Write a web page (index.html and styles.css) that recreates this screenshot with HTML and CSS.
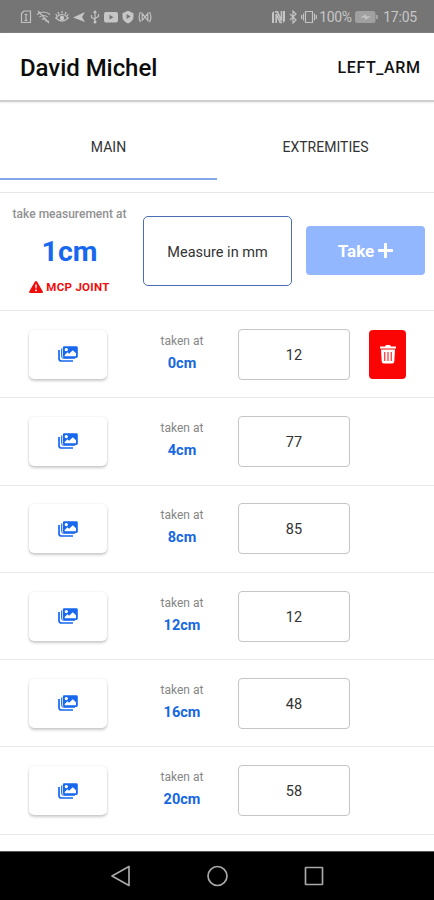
FILE: index.html
```html
<!DOCTYPE html>
<html lang="en">
<head>
<meta charset="utf-8">
<title>Measurements</title>
<link rel="stylesheet" href="styles.css">
</head>
<body>
<svg class="defs" width="0" height="0">
  <symbol id="images" viewBox="0 0 20 16">
    <path d="M1 4v8.500Q1 15 3.500 15H15" fill="none" stroke="currentColor" stroke-width="1.700"/>
    <path d="M3.600 2.500v7.800q0 2 2 2H17" fill="none" stroke="currentColor" stroke-width="1"/>
    <path fill="currentColor" fill-rule="evenodd" d="M6.200.3h12.200q1.400 0 1.400 1.400v8.800q0 1.400-1.400 1.400H6.200q-1.400 0-1.400-1.400V1.700Q4.800.3 6.200.3zM6.700 10.200h11.300V7.300l-3.200-3.100-3.700 3.600-1.600-1.500-2.800 2.600zM8.300 2a1.600 1.600 0 1 0 .01 0z"/>
  </symbol>
</svg>
<header class="status">
  <div class="status-left">
    <svg width="12" height="14" viewBox="0 0 12 14"><path d="M1.500 3.500L4 1h6.500v11.500h-9zM4.500 4.500h3M4.500 10.500h3M6 4.500v6"/></svg>
    <svg width="15" height="14" viewBox="0 0 15 14"><path d="M1 4.500q6.500-5 13 0M3.500 7q4-3 8 0M6 9.500q1.500-1.200 3 0M2 1l11 12M9 11h4"/></svg>
    <svg width="14" height="14" viewBox="0 0 14 14"><path d="M.8 8q6.200-7 12.400 0-6.200 6-12.400 0zM7 1v2.500M3 2l1 2.500M11 2l-1 2.500M.7 4l1.500 2M13.300 4l-1.500 2"/><circle class="solid" cx="7" cy="8" r="2.300"/></svg>
    <svg width="13" height="14" viewBox="0 0 13 14"><path class="solid" d="M0 7.500L12 2 9 7l3 5z"/></svg>
    <svg width="10" height="14" viewBox="0 0 10 14"><path d="M5 2v10M1.500 5v2.500L5 9.500M8.500 4v2.500L5 8.500"/><path class="solid" d="M5 0l2 3H3z"/><circle class="solid" cx="5" cy="12" r="1.500"/></svg>
    <svg width="14" height="14" viewBox="0 0 14 14"><path class="solid" fill-rule="evenodd" d="M2 2h10q2 0 2 2v6.500q0 2-2 2H2q-2 0-2-2V4q0-2 2-2zM5.500 4.800v4.800l4-2.400z"/></svg>
    <svg width="12" height="14" viewBox="0 0 12 14"><path class="solid" fill-rule="evenodd" d="M6 .8l5.500 2.400v3.500q0 4.300-5.500 6.800Q.5 11 .5 6.700V3.200zM4.600 4v5l4-2.500z"/></svg>
    <svg width="14" height="14" viewBox="0 0 14 14"><path d="M2.500 2Q-.3 7 2.500 12M11.500 2q2.800 5 0 10M4.200 11V3.500l5.600 7V3.500l-5.600 7"/></svg>
  </div>
  <div class="status-right">
    <svg width="13" height="14" viewBox="0 0 13 14"><path class="solid" d="M0 3l2-2v12H0zM11 1h2v10l-2 2z"/><path class="heavy" d="M3 1.800h2.500L9.500 11V1M4.200 13V4l4 8.500H10"/></svg>
    <svg width="8" height="14" viewBox="0 0 8 14"><path d="M1 4l6 6-3 3V1l3 3-6 6"/></svg>
    <svg width="16" height="14" viewBox="0 0 16 14"><path d="M4.500 1.500h7v11h-7zM2.500 3.500v7M13.500 3.500v7M.6 5v4M15.400 5v4"/></svg>
    <span class="pct">100%</span>
    <svg class="battery" width="23" height="12" viewBox="0 0 23 12"><rect class="charge" x="0" y="0" width="20.500" height="12" rx="2.500"/><path class="solid" d="M5 6.500l6-3V5.500h5l-6 3.200V6.500z"/><path d="M22 4v4"/></svg>
    <span class="time">17:05</span>
  </div>
</header>
<div class="titlebar">
  <h1>David Michel</h1>
  <span class="limb">LEFT_ARM</span>
</div>
<nav class="tabs">
  <div class="tab active">MAIN</div>
  <div class="tab">EXTREMITIES</div>
</nav>
<main>
  <section class="take-row">
    <div class="target">
      <span class="hint">take measurement at</span>
      <strong>1cm</strong>
      <span class="joint"><svg width="14" height="12" viewBox="0 0 14 12"><path fill="currentColor" fill-rule="evenodd" d="M7 0q.6 0 1 .6l5.800 10q.5 1.400-.9 1.400H1.100q-1.400 0-.9-1.400l5.800-10Q6.400 0 7 0zM6.200 3.500l.3 4h1l.3-4zM7 8.500a.9.900 0 1 0 .01 0z"/></svg>MCP JOINT</span>
    </div>
    <div class="measure">Measure in mm</div>
    <div class="take">Take<svg width="15" height="15" viewBox="0 0 15 15"><path d="M7.500 1v13M1 7.500h13" stroke="currentColor" stroke-width="3" stroke-linecap="round"/></svg></div>
  </section>
  <section class="row">
    <div class="photo"><svg width="20" height="16"><use href="#images"/></svg></div>
    <div class="at"><span>taken at</span><b>0cm</b></div>
    <div class="value">12</div>
    <div class="delete"><svg width="16" height="19" viewBox="0 0 16 19"><path fill="currentColor" d="M0 1.500h5L6 0h4l1 1.500h5v2H0z"/><path fill="currentColor" fill-rule="evenodd" d="M1 4.500h14l-.7 12q-.1 2-2 2H3.700q-1.900 0-2-2zM4.300 7v9h1V7zM7.500 7v9h1V7zM10.700 7v9h1V7z"/></svg></div>
  </section>
  <section class="row">
    <div class="photo"><svg width="20" height="16"><use href="#images"/></svg></div>
    <div class="at"><span>taken at</span><b>4cm</b></div>
    <div class="value">77</div>
  </section>
  <section class="row">
    <div class="photo"><svg width="20" height="16"><use href="#images"/></svg></div>
    <div class="at"><span>taken at</span><b>8cm</b></div>
    <div class="value">85</div>
  </section>
  <section class="row">
    <div class="photo"><svg width="20" height="16"><use href="#images"/></svg></div>
    <div class="at"><span>taken at</span><b>12cm</b></div>
    <div class="value">12</div>
  </section>
  <section class="row">
    <div class="photo"><svg width="20" height="16"><use href="#images"/></svg></div>
    <div class="at"><span>taken at</span><b>16cm</b></div>
    <div class="value">48</div>
  </section>
  <section class="row">
    <div class="photo"><svg width="20" height="16"><use href="#images"/></svg></div>
    <div class="at"><span>taken at</span><b>20cm</b></div>
    <div class="value">58</div>
  </section>
</main>
<footer class="navbar">
  <svg width="22" height="22" viewBox="0 0 22 22"><path d="M20 1.500v19L3 11z"/></svg>
  <svg width="22" height="22" viewBox="0 0 22 22"><circle cx="11.500" cy="11" r="9.500"/></svg>
  <svg width="22" height="22" viewBox="0 0 22 22"><rect x="2.500" y="2.500" width="17" height="17" rx=".5"/></svg>
</footer>
</body>
</html>
```
FILE: styles.css
```css
* { box-sizing: border-box; }
body {
  margin: 0;
  width: 434px;
  height: 900px;
  overflow: hidden;
  display: flex;
  flex-direction: column;
  background: #fff;
  color: #111;
  font-family: Roboto, "Liberation Sans", sans-serif;
}
svg { display: block; flex: none; }
.defs { position: absolute; }

.status {
  flex: none;
  height: 33px;
  padding: 1px 17px 0 20px;
  display: flex;
  align-items: center;
  justify-content: space-between;
  background: #757575;
  color: #c6c6c6;
}
.status-left, .status-right { display: flex; align-items: center; }
.status-left { gap: 4px; }
.status svg { fill: none; stroke: #c2c2c2; stroke-width: 1.200; }
.status svg .heavy { stroke-width: 1.700; }
.status .solid { fill: #c6c6c6; stroke: none; }
.status .charge { fill: #a0a0a0; stroke: none; }
.status-right svg + svg { margin-left: 4px; }
.pct { width: 34px; margin-left: 2px; font-size: 14px; letter-spacing: -.3px; white-space: nowrap; }
.status-right .battery { margin-left: 2px; }
.time { margin-left: 5px; font-size: 14px; letter-spacing: -.2px; }

.titlebar {
  flex: none;
  height: 69px;
  padding: 0 14px 0 20px;
  display: flex;
  align-items: center;
  justify-content: space-between;
  border-bottom: 2px solid #cfcfcf;
  box-shadow: 0 1px 2px #ececec;
}
h1 { margin: 2px 0 0; font-size: 24px; font-weight: 500; letter-spacing: -.05px; color: #0c0c0c; }
.limb { font-size: 16px; font-weight: 500; letter-spacing: .6px; margin: 1px -.6px 0 0; }

.tabs { flex: none; height: 91px; display: flex; border-bottom: 1px solid #e6e6e6; }
.tab {
  width: 217px;
  height: 78px;
  padding-top: 12px;
  display: flex;
  align-items: center;
  justify-content: center;
  font-size: 14px;
  color: #333;
}
.tab.active { border-bottom: 2px solid #84a9ea; padding-top: 14px; }

.take-row {
  height: 118px;
  padding: 0 0 1px 8px;
  display: flex;
  align-items: center;
  border-bottom: 1px solid #e6e6e6;
}
.target { width: 123px; display: flex; flex-direction: column; align-items: center; }
.hint { font-size: 12px; font-weight: 500; line-height: 14px; letter-spacing: 0; color: #919191; white-space: nowrap; }
.target strong { margin: 14px 0 11px; font-size: 28.500px; line-height: 34px; font-weight: 700; color: #1768ef; }
.joint { margin-bottom: 2px; display: flex; gap: 3px; align-items: center; font-size: 11.500px; line-height: 14px; letter-spacing: .3px; font-weight: 700; color: #f20d0d; white-space: nowrap; }
.measure {
  width: 149px;
  height: 70px;
  padding-top: 2px;
  margin-left: 12px;
  display: flex;
  align-items: center;
  justify-content: center;
  border: 1px solid #4c6eb0;
  border-radius: 5px;
  font-size: 14.500px;
  color: #333;
}
.take {
  width: 119px;
  height: 49px;
  margin: -1px 0 0 14px;
  display: flex;
  align-items: center;
  justify-content: center;
  gap: 4px;
  border-radius: 4px;
  background: #92b7ff;
  color: #fff;
  font-size: 17px;
  font-weight: 700;
}

.row { height: 87.300px; display: flex; align-items: center; padding-left: 29px; border-bottom: 1px solid #e9e9e9; }
.photo {
  width: 78px;
  height: 49px;
  display: flex;
  align-items: center;
  justify-content: center;
  border-radius: 5px;
  box-shadow: 0 2px 3px rgba(0, 0, 0, .2), 0 0 2px rgba(0, 0, 0, .1);
  color: #1768ef;
}
.at { width: 100px; margin-left: 25px; display: flex; flex-direction: column; align-items: center; line-height: 16px; }
.at span { margin: -4px 0 7px; font-size: 12px; color: #868686; }
.at b { font-size: 14.500px; font-weight: 700; color: #1768e0; }
.value {
  width: 112px;
  height: 51px;
  padding-top: 2px;
  margin-left: 6px;
  display: flex;
  align-items: center;
  justify-content: center;
  border: 1px solid #c5c5c5;
  border-radius: 4px;
  font-size: 14.500px;
  color: #333;
}
.delete {
  width: 37px;
  height: 49px;
  margin-left: 19px;
  display: flex;
  align-items: center;
  justify-content: center;
  border-radius: 4px;
  background: #fb0404;
  color: #fff;
}

.navbar {
  flex: none;
  height: 49px;
  margin-top: auto;
  border-top: 1px solid #555;
  display: flex;
  align-items: center;
  justify-content: center;
  gap: 75px;
  background: #000;
}
.navbar svg { fill: none; stroke: #a8a8a8; stroke-width: 1.700; stroke-linejoin: round; }
```
